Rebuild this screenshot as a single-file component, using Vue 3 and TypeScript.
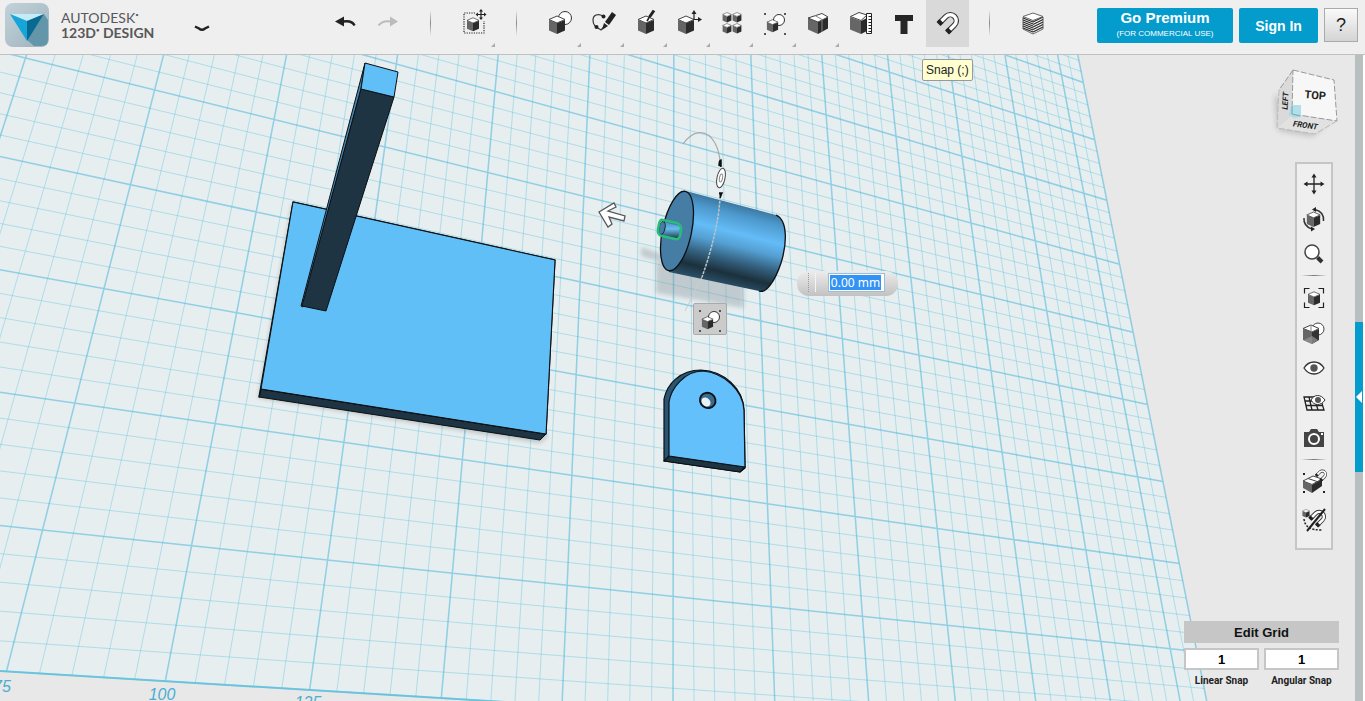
<script setup lang="ts">
import { ref } from 'vue'

interface Tool {
  id: string
  label: string
  divider?: boolean
  menu?: boolean
  active?: boolean
}

type Point = [number, number]

const tools: Tool[] = [
  { id: 'undo', label: 'Undo' },
  { id: 'redo', label: 'Redo' },
  { id: 'd1', label: '', divider: true },
  { id: 'transform', label: 'Transform', menu: true },
  { id: 'd2', label: '', divider: true },
  { id: 'primitives', label: 'Primitives', menu: true },
  { id: 'sketch', label: 'Sketch', menu: true },
  { id: 'construct', label: 'Construct', menu: true },
  { id: 'modify', label: 'Modify', menu: true },
  { id: 'pattern', label: 'Pattern', menu: true },
  { id: 'grouping', label: 'Grouping', menu: true },
  { id: 'combine', label: 'Combine', menu: true },
  { id: 'measure', label: 'Measure' },
  { id: 'text', label: 'Text' },
  { id: 'snap', label: 'Snap', active: true },
  { id: 'd3', label: '', divider: true },
  { id: 'material', label: 'Material' },
]

const viewTools: Tool[] = [
  { id: 'pan', label: 'Pan' },
  { id: 'orbit', label: 'Orbit' },
  { id: 'zoom', label: 'Zoom' },
  { id: 'v1', label: '', divider: true },
  { id: 'fit', label: 'Fit' },
  { id: 'shade', label: 'Materials and outlines' },
  { id: 'eye', label: 'Show or hide solids' },
  { id: 'grid', label: 'Grid visibility' },
  { id: 'camera', label: 'Screenshot' },
  { id: 'v2', label: '', divider: true },
  { id: 'groupsnap', label: 'Snap grouping' },
  { id: 'nosnap', label: 'Snap while sketching' },
]

const distance = ref('0.00 mm')
const linearSnap = ref('1')
const angularSnap = ref('1')

// Solves an n×n linear system by Gauss–Jordan elimination.
function solve(m: number[][]): number[] {
  const n = m.length
  for (let c = 0; c < n; c++) {
    let p = c
    for (let r = c + 1; r < n; r++) if (Math.abs(m[r][c]) > Math.abs(m[p][c])) p = r
    ;[m[c], m[p]] = [m[p], m[c]]
    for (let r = 0; r < n; r++) {
      if (r === c) continue
      const f = m[r][c] / m[c][c]
      for (let k = c; k <= n; k++) m[r][k] -= f * m[c][k]
    }
  }
  return m.map((row, i) => row[n] / row[i])
}

// Camera: four points of the work plane and where they fall in the viewport.
const anchors: [Point, Point][] = [
  [[0, 0], [6.5, 671.3]],
  [[0, 5], [154.6, 90]],
  [[11.4, 8], [1094.7, 139.7]],
  [[11.4, 2], [1179.3, 563.6]],
]
const rows: number[][] = []
for (const [[u, v], [x, y]] of anchors) {
  rows.push([u, v, 1, 0, 0, 0, -u * x, -v * x, x])
  rows.push([0, 0, 0, u, v, 1, -u * y, -v * y, y])
}
const h = solve(rows)

function project(u: number, v: number): string {
  const w = h[6] * u + h[7] * v + 1
  const x = (h[0] * u + h[1] * v + h[2]) / w
  const y = (h[3] * u + h[4] * v + h[5]) / w
  return `${x.toFixed(1)} ${y.toFixed(1)}`
}

const U0 = -3
const U1 = 11.4
const V1 = 10
let minor = ''
let major = ''
for (let i = U0 * 5; i <= 57; i++) {
  const seg = `M${project(i / 5, 0)}L${project(i / 5, V1)}`
  if (i % 5 === 0 || i === 57) major += seg
  else minor += seg
}
for (let j = 0; j <= V1 * 5; j++) {
  const seg = `M${project(U0, j / 5)}L${project(U1, j / 5)}`
  if (j % 5 === 0) major += seg
  else minor += seg
}
const plane = `M${project(U0, 0)}L${project(U1, 0)}L${project(U1, V1)}L${project(U0, V1)}Z`
const frontEdge = `M${project(U0, 0)}L${project(U1, 0)}`
</script>

<template>
  <div class="app">
    <svg class="defs" aria-hidden="true">
      <defs>
        <linearGradient id="g-tile" x1="0" y1="0" x2="1" y2="1">
          <stop offset="0" stop-color="#c3d2d9" /><stop offset="1" stop-color="#9db3be" />
        </linearGradient>
        <symbol id="cube" viewBox="-9 -10 18 20">
          <path d="M-8-5 0-2V9L-8 5.500Z" fill="#666" />
          <path d="M8-5 0-2V9L8 5.500Z" fill="#2b2b2b" />
          <path d="M0-9 8-5.500 0-2-8-5.500Z" fill="#fff" stroke="#444" stroke-width="1" />
        </symbol>
        <symbol id="magnet" viewBox="-12 -12 24 24">
          <path d="M-8 0.500-1-6.500A6 6 0 0 1 7.500 2L0.500 9" fill="none" stroke="#333" stroke-width="5.500" />
          <path d="M-7.500 0-1-6.500A6 6 0 0 1 7.500 2L1 8.500" fill="none" stroke="#fff" stroke-width="3.300" />
          <path d="M-8.500 1-5.500-2M0 9.500 3 6.500" fill="none" stroke="#222" stroke-width="5.500" />
        </symbol>
        <symbol id="i-undo" viewBox="-16 -16 32 32">
          <path d="M-10-1.500-1-6.500V3.500Z" fill="#222" />
          <path d="M-2-1.500C4-2.500 8-1 9.500 2.500" fill="none" stroke="#222" stroke-width="2.500" />
        </symbol>
        <symbol id="i-redo" viewBox="-16 -16 32 32">
          <path d="M10-1.500 2-6.500V3.500Z" fill="#bbb" />
          <path d="M3-1.500C-3-2.500-7-1-9.500 2.500" fill="none" stroke="#bbb" stroke-width="2" />
        </symbol>
        <symbol id="i-transform" viewBox="-16 -16 32 32">
          <path d="M1-10H-10V10H10V-2" fill="none" stroke="#222" stroke-width="1.200" stroke-dasharray="1.200 1.200" />
          <use href="#cube" x="-8" y="-6" width="14" height="15" />
          <path d="M7-12V-4M3-8.500H11" stroke="#222" stroke-width="1.200" />
          <path d="M7-14 9-11.500H5ZM7-3 9-5.500H5ZM1.500-8.500 4-10.500V-6.500ZM12.500-8.500 10-10.500V-6.500Z" fill="#222" />
        </symbol>
        <symbol id="i-primitives" viewBox="-16 -16 32 32">
          <circle cx="5" cy="-5" r="6.500" fill="#fff" stroke="#333" stroke-width="1" />
          <use href="#cube" x="-12" y="-8" width="18" height="20" />
        </symbol>
        <symbol id="i-sketch" viewBox="-16 -16 32 32">
          <path d="M0-7C-5-10-10-8-10-3C-10 3-7 4-2 7L2 2" fill="none" stroke="#333" stroke-width="1.200" />
          <circle cx="0.500" cy="-6.500" r="2" fill="#222" /><circle cx="-6.500" cy="4" r="2" fill="#222" />
          <path d="M9-11 13-8 6 2 2-1Z" fill="#222" />
          <path d="M1 0 5 3-1 7Z" fill="#222" />
        </symbol>
        <symbol id="i-construct" viewBox="-16 -16 32 32">
          <use href="#cube" x="-9" y="-8" width="18" height="20" />
          <path d="M1-2 4-7" stroke="#222" stroke-width="1.500" /><path d="M3.500-6 8-12.500" stroke="#222" stroke-width="3" />
        </symbol>
        <symbol id="i-modify" viewBox="-16 -16 32 32">
          <use href="#cube" x="-12" y="-8" width="18" height="20" />
          <path d="M5-3V-11M5-3.500H11" fill="none" stroke="#222" stroke-width="1.200" />
          <path d="M5-13 7.500-9H2.500ZM13-3.500 9-6V-1Z" fill="#222" />
        </symbol>
        <symbol id="i-pattern" viewBox="-16 -16 32 32">
          <use href="#cube" x="-10" y="-11" width="10" height="11" /><use href="#cube" x="0" y="-11" width="10" height="11" />
          <use href="#cube" x="-10" y="0" width="10" height="11" /><use href="#cube" x="0" y="0" width="10" height="11" />
        </symbol>
        <symbol id="i-grouping" viewBox="-16 -16 32 32">
          <circle cx="4" cy="-3" r="5.500" fill="#fff" stroke="#333" stroke-width="1" />
          <use href="#cube" x="-9" y="-4" width="13" height="14" />
          <path d="M-11-10h2v2h-2zM9-10h2v2H9zM-11 10h2v2h-2zM9 10h2v2H9z" fill="#555" />
        </symbol>
        <symbol id="i-combine" viewBox="-16 -16 32 32">
          <path d="M-10-5 0-1V11L-10 6.500Z" fill="#666" /><path d="M10-6 0-1V11L10 5.500Z" fill="#2b2b2b" />
          <path d="M-10-5 4-9.500 10-6 0-1Z" fill="#fff" stroke="#444" stroke-width="1" />
          <path d="M-3-7.500 4-3.500V9" fill="none" stroke="#888" stroke-width="1" />
        </symbol>
        <symbol id="i-measure" viewBox="-16 -16 32 32">
          <path d="M-11-6 0-2V11L-11 6.500Z" fill="#666" /><path d="M8-6 0-2V11L8 7Z" fill="#2b2b2b" />
          <path d="M-2-10.500 6-8 0-2.500-10.500-6.500Z" fill="#fff" stroke="#444" />
          <path d="M5.500-9.500H10.500V10.500H5.500Z" fill="#fff" stroke="#222" />
          <path d="M7.500-6.500H10M7.500-3.500H10M7.500-.5H10M7.500 2.500H10M7.500 5.500H10M7.500 8.500H10" stroke="#222" />
        </symbol>
        <symbol id="i-text" viewBox="-16 -16 32 32"><path d="M-9-8H9V-2H3.500V11H-3.500V-2H-9Z" fill="#262626" /></symbol>
        <symbol id="i-snap" viewBox="-16 -16 32 32"><use href="#magnet" x="-12" y="-12" width="24" height="24" /></symbol>
        <symbol id="i-material" viewBox="-16 -16 32 32">
          <path d="M-10-6 0-2V11L-10 6ZM10-6 0-2V11L10 6Z" fill="#f4f4f4" />
          <path d="M-10-5 0-1M-10-3 0 1M-10-1 0 3M-10 1 0 5M-10 3 0 7M-10 5 0 9M0-1 10-6M0 1.500 10-3.500M0 4 10-1M0 6.500 10 1.500M0 9 10 4" fill="none" stroke="#2b2b2b" stroke-width="1.200" />
          <path d="M-10-6V6L0 11 10 6V-6" fill="none" stroke="#444" stroke-width="0.800" />
          <path d="M0-10 10-6.500 0-2.500-10-6.500Z" fill="#fff" stroke="#666" />
        </symbol>
        <symbol id="i-pan" viewBox="-16 -16 32 32">
          <path d="M0-8V8M-8 0H8" stroke="#222" stroke-width="1.300" />
          <path d="M0-10.500 2.500-6.500H-2.500ZM0 10.500 2.500 6.500H-2.500ZM-10.500 0-6.500-2.500V2.500ZM10.500 0 6.500-2.500V2.500Z" fill="#222" />
        </symbol>
        <symbol id="i-orbit" viewBox="-16 -16 32 32">
          <use href="#cube" x="-8" y="-8" width="15" height="17" />
          <path d="M1-9.500C7-8 10-4 9.500 2M-2 10C-8 8-10.500 4-10-1" fill="none" stroke="#333" stroke-width="1.500" />
          <path d="M-2-9.500 2-12V-7ZM1 10-3 7.500V12.500Z" fill="#222" />
        </symbol>
        <symbol id="i-zoom" viewBox="-16 -16 32 32">
          <path d="M3.500 3.500 8 8" stroke="#333" stroke-width="4" />
          <circle cx="-2" cy="-2" r="7" fill="#fff" stroke="#444" stroke-width="1.500" />
        </symbol>
        <symbol id="i-fit" viewBox="-16 -16 32 32">
          <use href="#cube" x="-7" y="-7" width="14" height="15" />
          <path d="M-9.500-4.500V-9.500H-4.500M4.500-9.500H9.500V-4.500M9.500 4.500V9.500H4.500M-4.500 9.500H-9.500V4.500" fill="none" stroke="#222" stroke-width="1.200" />
        </symbol>
        <symbol id="i-shade" viewBox="-16 -16 32 32">
          <circle cx="4" cy="-4" r="6" fill="#fff" stroke="#444" />
          <path d="M-11-4-2-1V11L-11 7Z" fill="#666" /><path d="M5-4-2-1V11L5 7Z" fill="#333" />
          <path d="M-2 3 4 7-2 11-10 7Z" fill="#999" opacity="0.700" />
          <path d="M-3-8 5-4.500-2-1-11-4.500Z" fill="#fff" stroke="#444" />
          <path d="M-3-8V-1" stroke="#888" />
        </symbol>
        <symbol id="i-eye" viewBox="-16 -16 32 32">
          <path d="M-10 0C-5-8 5-8 10 0C5 8-5 8-10 0Z" fill="#fff" stroke="#333" stroke-width="1.300" />
          <circle r="3.700" fill="#555" />
        </symbol>
        <symbol id="i-grid" viewBox="-16 -16 32 32">
          <path d="M-10-6H6L10 7H-7ZM-9-2H8M-8 2.500H9M-5-6-2 7M0-6 4 7" fill="none" stroke="#222" stroke-width="1.300" />
          <path d="M-3-3C0-9 7-9 11-3C7 3 0 3-3-3Z" fill="#fff" stroke="#333" /><circle cx="4" cy="-3" r="3" fill="#555" />
        </symbol>
        <symbol id="i-camera" viewBox="-16 -16 32 32">
          <path d="M-10-6H-5L-3-9H3L5-6H10V9H-10Z" fill="#444" />
          <circle cx="0" cy="1" r="5" fill="#444" stroke="#fff" stroke-width="2" /><path d="M7-5h2v2H7z" fill="#fff" />
        </symbol>
        <symbol id="i-groupsnap" viewBox="-16 -16 32 32">
          <path d="M-11-1-2 3V11L-11 6Z" fill="#666" /><path d="M8-3-2 3V11L8 4Z" fill="#2b2b2b" />
          <path d="M-1-6 8-3-2 2.500-11-1Z" fill="#fff" stroke="#444" /><path d="M-6-3.500 3-.5" stroke="#444" />
          <use href="#magnet" x="0" y="-13" width="13" height="13" />
          <path d="M-11-9h2v2h-2zM-11 9h2v2h-2zM9 9h2v2H9z" fill="#222" />
        </symbol>
        <symbol id="i-nosnap" viewBox="-16 -16 32 32">
          <use href="#magnet" x="-7" y="-12" width="19" height="19" />
          <path d="M-10-2C-9 6-4 9 8 9" fill="none" stroke="#222" stroke-width="1.500" stroke-dasharray="2 1.500" />
          <use href="#cube" x="-12" y="-12" width="8" height="9" />
          <path d="M-7 10 11-12" stroke="#222" stroke-width="2" />
        </symbol>
      </defs>
    </svg>

    <header class="bar">
      <div class="brand">
        <svg class="logo" viewBox="0 0 44 44" aria-hidden="true">
          <rect width="44" height="44" rx="8" fill="url(#g-tile)" />
          <path d="M39 11 43 17V37Q43 43 36 43H29L22 37Z" fill="#6496aa" />
          <path d="M5 11H39L22 18Z" fill="#c4ecf8" /><path d="M5 11 22 18V38Z" fill="#16a5d8" /><path d="M39 11 22 18V38Z" fill="#086a92" />
        </svg>
        <div class="name">
          <span>AUTODESK<sup>•</sup></span>
          <strong>123D<sup>•</sup> DESIGN</strong>
        </div>
        <button class="chevron" type="button" aria-label="Application menu">
          <svg viewBox="0 0 16 8"><path d="M1 1.500 5 3.500Q8 6 11 3.500L15 1.500" fill="none" stroke="#222" stroke-width="2.500" /></svg>
        </button>
      </div>

      <nav class="tools" aria-label="Tools">
        <template v-for="t in tools" :key="t.id">
          <i v-if="t.divider" class="divider"></i>
          <button v-else type="button" class="tool" :class="{ active: t.active, menu: t.menu }" :aria-label="t.label">
            <svg class="icon"><use :href="'#i-' + t.id" /></svg>
            <span v-if="t.id === 'snap'" class="tip">Snap (;)</span>
          </button>
        </template>
      </nav>

      <div class="account">
        <button type="button" class="cta premium">Go Premium<small>(FOR COMMERCIAL USE)</small></button>
        <button type="button" class="cta signin">Sign In</button>
        <button type="button" class="help">?</button>
      </div>
    </header>

    <main class="stage">
      <svg class="scene" viewBox="0 55 1365 646" preserveAspectRatio="xMinYMin slice" role="img" aria-label="Work plane with solids">
        <defs>
          <linearGradient id="g-cyl" gradientUnits="userSpaceOnUse" x1="731" y1="203" x2="711" y2="282">
            <stop offset="0" stop-color="#3d78a2" /><stop offset="0.120" stop-color="#4c98cc" /><stop offset="0.340" stop-color="#64bcf7" />
            <stop offset="0.500" stop-color="#549fd2" /><stop offset="0.680" stop-color="#34617f" /><stop offset="0.850" stop-color="#1b303c" /><stop offset="1" stop-color="#2b5068" />
          </linearGradient>
          <linearGradient id="g-peg" x1="0" y1="0" x2="0" y2="1">
            <stop offset="0" stop-color="#4c8fbe" /><stop offset="0.400" stop-color="#69bdf0" /><stop offset="1" stop-color="#1d3442" />
          </linearGradient>
          <filter id="soft" x="-20%" y="-20%" width="140%" height="140%"><feGaussianBlur stdDeviation="2" /></filter>
        </defs>
        <path :d="plane" fill="#e6eef0" />
        <path :d="minor" class="minor" />
        <path :d="major" class="major" />
        <path :d="frontEdge" class="edge" />
        <g class="ruler">
          <text x="2" y="692">75</text>
          <text x="162" y="700">100</text>
          <text x="308" y="708">125</text>
        </g>

        <path d="M292 203 258 398 540 443 548 436Z" fill="#000" opacity="0.180" filter="url(#soft)" />
        <g stroke="#0b0f12" stroke-linejoin="round">
          <path d="M261 389 259 397 540 440 546 434Z" fill="#1e3442" />
          <path d="M293 202 555 260 546 434 261 389 259 397Z" fill="#61bff8" stroke-width="1.300" />
          <path d="M293 202 555 260 546 434 261 389Z" fill="#61bff8" />
          <path d="M365 63 361 89 303 307 301 306Z" fill="#4686b3" />
          <path d="M361 89 394 97 326 311 302 306Z" fill="#1e3442" />
          <path d="M365 63 398 72 394 97 361 89Z" fill="#61bff8" />
        </g>

        <g fill="#7d8c94" opacity="0.350" filter="url(#soft)">
          <path d="M641 247 668 256 668 264 641 256Z" /><path d="M656 262 656 293 744 308 744 278Z" />
        </g>
        <path d="M686 191 776 215C788 220 787 244 781 263C775 281 766 294 759 291L669 272Z" fill="url(#g-cyl)" />
        <path d="M776 215C788 220 787 244 781 263C775 281 766 294 759 291" fill="none" stroke="#0b1014" stroke-width="1.300" />
        <ellipse cx="677" cy="231" rx="14.500" ry="40.500" transform="rotate(12 677 231)" fill="#457da5" stroke="#0b1014" stroke-width="1.300" />
        <path d="M663 222 680 226 679 239 662 235Z" fill="url(#g-peg)" />
        <ellipse cx="662" cy="228" rx="3" ry="6.500" transform="rotate(12 662 228)" fill="#457da5" stroke="#16242d" />
        <path d="M663 220 677 223Q682 225 681 231L680 236Q679 240 675 239L662 236Q657 235 658 229L659 224Q660 219 663 220Z" fill="none" stroke="#28bd7c" stroke-width="2.500" />
        <path d="M683 144C692 131 706 127 715 143C719 151 720 157 720 163" fill="none" stroke="#aaa" stroke-width="1.200" />
        <path d="M720 197C719 221 711 252 702 277" fill="none" stroke="#b9c3c8" stroke-width="1.500" stroke-dasharray="3 1" />
        <path d="M702 277 685 311" stroke="#ccc" stroke-width="1" />
        <path d="M719 166Q719 160 721 160V167M719 193H722L720 198" fill="#111" stroke="#111" stroke-width="1.500" />
        <ellipse cx="721" cy="178" rx="4" ry="10" transform="rotate(12 721 178)" fill="#fff" stroke="#444" />
        <ellipse cx="721" cy="178" rx="1.500" ry="4" transform="rotate(12 721 178)" fill="none" stroke="#888" />
        <path d="M599 212 614 203 616 207 608 211 625 216 624 221 609 217 612 224 608 227Z" fill="#fff" stroke="#555" stroke-width="1.300" />

        <g stroke="#0b1014" stroke-width="1.200" stroke-linejoin="round">
          <path d="M664 461V399C667 384 680 370 701 370C724 371 743 388 744 410L745 468 740 472Z" fill="#2b5470" />
          <path d="M664 461 669 456 745 467 740 472Z" fill="#1e3442" />
          <path d="M669 456V402C671 389 684 371 703 371C724 373 743 390 744 410L745 467Z" fill="#64c0fb" />
          <ellipse cx="708" cy="400.500" rx="8" ry="7.500" transform="rotate(35 708 400)" fill="#3a6c8e" stroke-width="1.800" />
        </g>
        <ellipse cx="706" cy="402" rx="5" ry="4" transform="rotate(45 706 402)" fill="#e8f2f4" />
      </svg>

      <svg class="viewcube" viewBox="1266 60 80 84" role="img" aria-label="View cube">
        <defs>
          <filter id="cs" x="-20%" y="-20%" width="140%" height="140%"><feGaussianBlur stdDeviation="3" /></filter>
        </defs>
        <path d="M1275 95 1278 130 1312 136 1330 120Z" fill="#000" opacity="0.200" filter="url(#cs)" />
        <path d="M1293 70 1279 90 1277 128 1292 114Z" fill="#dadada" />
        <path d="M1292 114 1277 128 1315 134 1337 121Z" fill="#e1e1e1" />
        <path d="M1293 70 1334 80 1337 121 1292 114Z" fill="#f7f7f7" />
        <path d="M1293 70 1334 80 1337 121 1292 114ZM1293 70 1279 90" fill="none" stroke="#999" stroke-width="1" stroke-dasharray="6 2" />
        <path d="M1279 90 1277 128 1315 134 1337 121" fill="none" stroke="#bbb" stroke-width="1" stroke-dasharray="6 2" />
        <path d="M1291 105H1301V117L1294 118 1289 115Z" fill="#a6dbe8" opacity="0.850" /><path d="M1292 106V114L1300 116" fill="none" stroke="#7aa" />
        <text x="1315" y="99" transform="rotate(5 1315 99)" class="face top">TOP</text>
        <text x="1305" y="128" transform="rotate(8 1305 128)" class="face front">FRONT</text>
        <text x="1288" y="101" transform="rotate(-86 1288 101)" class="face side">LEFT</text>
      </svg>

      <label class="pill">
        <i class="grip"></i>
        <span class="field"><input v-model="distance" aria-label="Distance" /></span>
      </label>
      <button type="button" class="mini" aria-label="Group">
        <svg class="icon"><use href="#i-grouping" /></svg>
      </button>

      <aside class="views" aria-label="View tools">
        <template v-for="t in viewTools" :key="t.id">
          <i v-if="t.divider" class="rule"></i>
          <button v-else type="button" class="view" :aria-label="t.label">
            <svg class="icon"><use :href="'#i-' + t.id" /></svg>
          </button>
        </template>
      </aside>

      <section class="gridbox">
        <button type="button" class="edit">Edit Grid</button>
        <label class="snap"><input v-model="linearSnap" /><span>Linear Snap</span></label>
        <label class="snap"><input v-model="angularSnap" /><span>Angular Snap</span></label>
      </section>

      <div class="rail">
        <button type="button" class="drawer" aria-label="Open parts panel"><svg viewBox="0 0 8 12"><path d="M7 0V12L1 6Z" fill="#fff" /></svg></button>
      </div>
    </main>
  </div>
</template>

<style>
body {
  margin: 0;
  background: #fff;
}
</style>

<style scoped>
.app {
  display: flex;
  flex-direction: column;
  height: 100vh;
  overflow: hidden;
  background: #efefef;
  font-family: "Liberation Sans", Arial, sans-serif;
  color: #222;
}
.app * {
  box-sizing: border-box;
}
.defs {
  position: absolute;
  width: 0;
  height: 0;
}
button {
  padding: 0;
  border: 0;
  background: none;
  font-family: inherit;
  color: inherit;
}
.icon {
  display: block;
  width: 32px;
  height: 32px;
  overflow: visible;
}
.bar {
  position: relative;
  z-index: 2;
  display: flex;
  align-items: flex-start;
  flex: none;
  height: 55px;
  padding: 0 7px 0 5px;
  border-bottom: 1px solid #c0c0c0;
  background: #efefef;
}
.brand {
  display: flex;
  align-items: flex-start;
  flex: none;
  width: 319px;
  padding-top: 3px;
}
.logo {
  width: 44px;
  height: 44px;
}
.name {
  display: flex;
  flex-direction: column;
  width: 120px;
  margin: 7px 0 0 12px;
  font-family: Lato, "Liberation Sans", sans-serif;
  font-size: 14px;
  line-height: 15px;
  color: #58585a;
  white-space: nowrap;
}
.name sup {
  font-size: 6px;
  line-height: 0;
  vertical-align: 6px;
}
.chevron {
  width: 16px;
  height: 8px;
  margin: 22px 0 0 13px;
}
.chevron svg {
  display: block;
}
.tools {
  display: flex;
  flex: none;
}
.tool {
  position: relative;
  display: flex;
  width: 43px;
  height: 47px;
  padding: 7px 0 0 5px;
}
.tool.active {
  background: #d9d9d9;
}
.tool.menu::after {
  content: "";
  position: absolute;
  right: 1px;
  bottom: 0;
  border: 2px solid #aaa;
  border-top-color: transparent;
  border-left-color: transparent;
}
.divider {
  width: 1px;
  height: 26px;
  margin: 10px 22px 0 20px;
  background: linear-gradient(#efefef, #888, #efefef);
}
.tip {
  position: absolute;
  top: 59px;
  left: -4px;
  padding: 0 3px;
  border: 1px solid #999;
  border-radius: 2px;
  background: #ffffd0;
  font-size: 12px;
  line-height: 20px;
  white-space: nowrap;
}
.account {
  display: flex;
  gap: 6px;
  margin: 8px 0 0 auto;
}
.cta {
  height: 35px;
  border-radius: 2px;
  background: #049bcd;
  color: #fff;
  font-size: 15px;
  font-weight: bold;
  line-height: 16px;
}
.premium {
  width: 136px;
}
.premium small {
  display: block;
  font-size: 8px;
  font-weight: normal;
}
.signin {
  width: 79px;
  font-size: 14px;
}
.help {
  width: 34px;
  height: 34px;
  border: 1px solid #aaa;
  background: linear-gradient(#fafafa, #d4d4d4);
  font-size: 18px;
}
.stage {
  position: relative;
  flex: 1;
  min-height: 0;
  background: #e8e8e8;
}
.scene {
  display: block;
  width: 100%;
  height: 100%;
}
.minor,
.major,
.edge {
  fill: none;
  stroke: #55bfdb;
}
.minor {
  stroke-opacity: 0.38;
}
.major {
  stroke: #3bb0da;
  stroke-opacity: 0.5;
  stroke-width: 1.500px;
}
.edge {
  stroke-opacity: 0.7;
  stroke-width: 2px;
}
.ruler {
  fill: #4aaed2;
  font-size: 16px;
  font-style: italic;
  text-anchor: middle;
}
.viewcube {
  position: absolute;
  top: 5px;
  right: 19px;
  width: 80px;
  height: 84px;
}
.face {
  fill: #222;
  font-family: Roboto, sans-serif;
  font-weight: bold;
  text-anchor: middle;
}
.top {
  font-size: 11px;
}
.front,
.side {
  font-size: 8px;
  font-style: italic;
}
.pill {
  position: absolute;
  top: 216px;
  left: 797px;
  display: flex;
  justify-content: flex-end;
  width: 101px;
  height: 25px;
  padding: 2px 13px 4px 0;
  border-radius: 12px;
  background: linear-gradient(#ececec, #c2c2c2);
}
.grip {
  width: 8px;
  margin: 0 auto 0 11px;
  border-left: 1px dotted #999;
  border-right: 1px solid #f4f4f4;
}
.field {
  width: 57px;
  height: 19px;
  padding: 1px;
  border: 1px solid #9cbdd8;
  background: #fff;
}
.field input {
  display: block;
  width: 51px;
  height: 15px;
  padding: 0;
  border: 0;
  background: #3393f5;
  color: #fff;
  font-family: "Noto Sans", sans-serif;
  font-size: 12px;
  text-align: center;
}
.mini {
  position: absolute;
  top: 248px;
  left: 693px;
  width: 34px;
  height: 32px;
  border: 1px solid #aaa;
  border-radius: 2px;
  background: #cbcbcb;
}
.views {
  position: absolute;
  top: 107px;
  right: 32px;
  width: 38px;
  padding: 2px 0 10px;
  border: 2px solid #c6c6c6;
  background: #efefef;
}
.view {
  display: flex;
  align-items: center;
  justify-content: center;
  width: 100%;
  height: 35px;
}
.view:last-child {
  margin-top: 4px;
}
.rule {
  display: block;
  height: 1px;
  margin: 4px;
  background: linear-gradient(90deg, #efefef, #777, #efefef);
}
.gridbox {
  position: absolute;
  right: 26px;
  bottom: 14px;
  display: grid;
  grid-template-columns: 1fr 1fr;
  gap: 5px;
  width: 155px;
}
.edit {
  grid-column: 1 / -1;
  height: 22px;
  background: #c6c6c6;
  color: #111;
  font-size: 13px;
  font-weight: bold;
}
.snap {
  display: flex;
  flex-direction: column;
  font-size: 10px;
  font-weight: bold;
  line-height: 12px;
  text-align: center;
  white-space: nowrap;
}
.snap input {
  width: 100%;
  height: 22px;
  margin-bottom: 5px;
  padding: 0;
  border: 2px solid #c6c6c6;
  background: #fff;
  font-family: inherit;
  font-size: 13px;
  font-weight: bold;
  text-align: center;
}
.snap span {
  font-family: Roboto, sans-serif;
}
.rail {
  position: absolute;
  top: 0;
  right: 0;
  bottom: 0;
  width: 10px;
  padding-top: 267px;
  border-right: 2px solid #fff;
  background: #b7c0bf;
}
.drawer {
  display: flex;
  align-items: center;
  width: 8px;
  height: 150px;
  background: #049bcd;
}
.drawer svg {
  width: 8px;
  height: 12px;
}
</style>
